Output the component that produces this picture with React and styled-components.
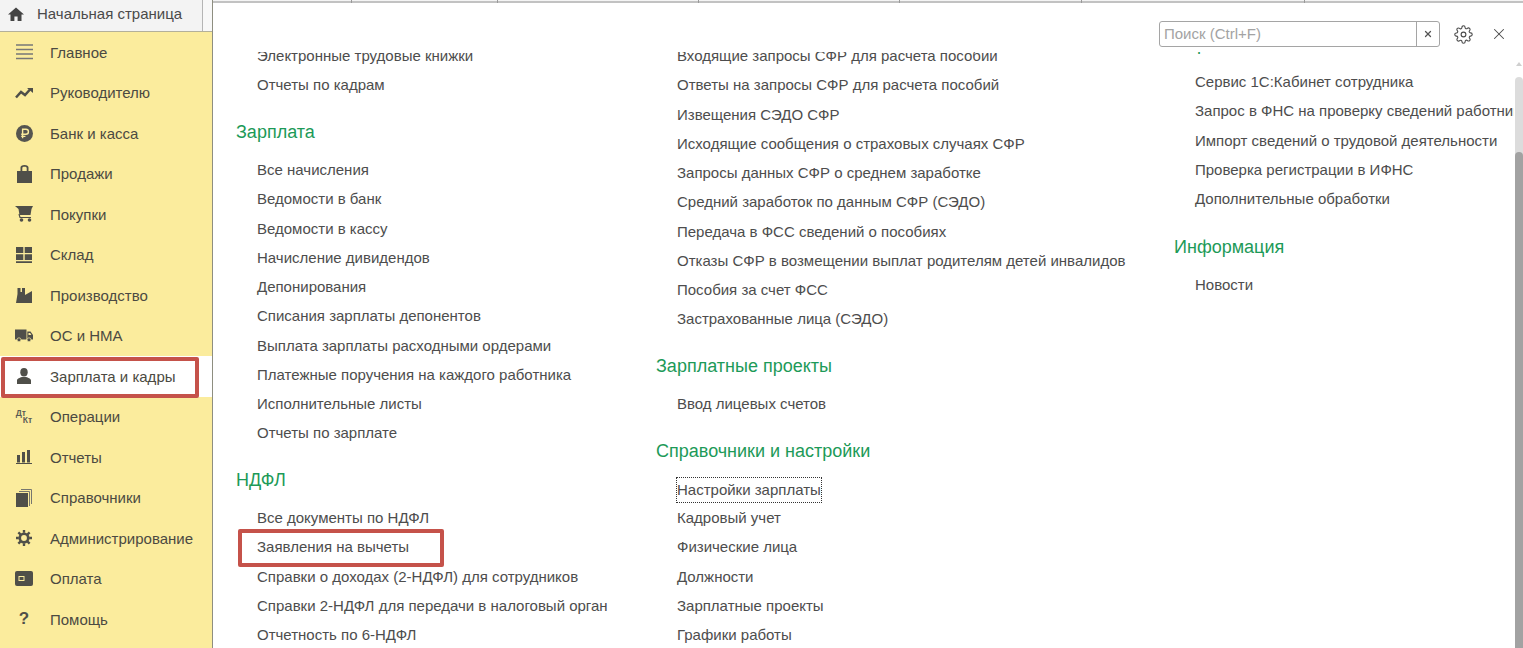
import React from 'react'
import styled, { createGlobalStyle } from 'styled-components'
import { FiSettings, FiX } from 'react-icons/fi'

const GlobalStyle = createGlobalStyle`
  html, body {
    margin: 0;
    padding: 0;
    height: 648px;
    overflow: hidden;
    background: #fff;
    font-family: "Liberation Sans", Arial, sans-serif;
  }
`

const Page = styled.div`
  display: flex;
  width: 1523px;
  height: 648px;
  overflow: hidden;
`

const Sidebar = styled.div`
  display: flex;
  flex-direction: column;
  width: 213px;
  box-sizing: border-box;
  flex-shrink: 0;
  background: #fbec9d;
  border-right: 1px solid #8e8e80;
`

const TabRow = styled.div`
  display: flex;
  height: 31px;
  flex-shrink: 0;
  background: #f8f8f8;
`

const HomeTab = styled.div`
  display: flex;
  align-items: center;
  gap: 13px;
  width: 203px;
  padding: 0 0 4px 8px;
  box-sizing: border-box;
  background: #f3f3f3;
  border-right: 1px solid #b5b5b5;
  font-size: 15px;
  color: #4a4a4a;
`

const Divider = styled.div`
  height: 1px;
  background: #b3b09a;
  flex-shrink: 0;
`

const Menu = styled.div`
  display: flex;
  flex-direction: column;
`

const MenuItem = styled.div`
  position: relative;
  display: flex;
  align-items: center;
  height: 40.5px;
  flex-shrink: 0;
  padding-left: 15px;
  gap: 17px;
  font-size: 15px;
  color: #4b4a42;
  background: ${(p) => (p.$active ? '#fff' : 'transparent')};
`

const IconSlot = styled.span`
  display: flex;
  align-items: center;
  justify-content: center;
  width: 18px;
  height: 18px;
  color: #4f4f49;
  flex-shrink: 0;
`

const MenuOutline = styled.div`
  position: absolute;
  left: 1px;
  top: 1px;
  bottom: -1.5px;
  width: 198px;
  box-sizing: border-box;
  border: 4px solid #c5524a;
  border-radius: 2px;
`

const LinkOutline = styled.div`
  position: absolute;
  left: -19px;
  right: -35px;
  top: -3px;
  bottom: -5px;
  box-sizing: border-box;
  border: 4px solid #c5524a;
  border-radius: 2px;
`

const Main = styled.div`
  flex: 1;
  display: flex;
  flex-direction: column;
  min-width: 0;
`

const TopStrip = styled.div`
  display: flex;
  height: 3px;
  box-sizing: border-box;
  flex-shrink: 0;
  background: #f4f4f4;
  border-bottom: 2px solid #c2c2c2;
`

const TopCell = styled.div`
  width: ${(p) => p.$w}px;
  box-sizing: border-box;
  height: 3px;
  border-right: 1px solid #9a9a9a;
  flex-shrink: 0;
`

const Header = styled.div`
  display: flex;
  justify-content: flex-end;
  align-items: center;
  height: 49px;
  padding: 0 15px 0 0;
  box-sizing: border-box;
  flex-shrink: 0;
`

const SearchBox = styled.div`
  display: flex;
  width: 281px;
  height: 26px;
  margin-top: 13px;
  box-sizing: border-box;
  border: 1px solid #a5a5a5;
  border-radius: 3px;
  background: #fff;
`

const SearchInput = styled.div`
  flex: 1;
  padding-left: 4px;
  font-size: 15px;
  line-height: 24px;
  color: #a3a3a3;
`

const SearchClear = styled.div`
  display: flex;
  align-items: center;
  justify-content: center;
  width: 22px;
  border-left: 1px solid #a5a5a5;
  color: #555;
`

const ToolButton = styled.span`
  display: flex;
  margin: 13px 0 0 ${(p) => p.$ml}px;
  color: #4a4a4a;
`

const Viewport = styled.div`
  flex: 1;
  display: flex;
  min-height: 0;
`

const Columns = styled.div`
  flex: 1;
  display: flex;
  min-width: 0;
  overflow: hidden;
`

const Column = styled.div`
  display: flex;
  flex-direction: column;
  width: ${(p) => p.$w}px;
  margin-top: ${(p) => p.$top}px;
  padding-left: 23px;
  box-sizing: border-box;
  flex-shrink: 0;
`

const Section = styled.div`
  display: flex;
  flex-direction: column;
  flex-shrink: 0;
  margin-bottom: ${(p) => p.$gap || 20.75}px;
`

const SectionTitle = styled.div`
  font-size: 18px;
  line-height: 24px;
  color: #1d9a58;
  margin-bottom: 10.7px;
`

const LinkItem = styled.div`
  position: relative;
  align-self: flex-start;
  margin-left: 21px;
  font-size: 15px;
  line-height: 29.25px;
  height: 29.25px;
  white-space: nowrap;
  color: #4d4d4d;
`

const Focus = styled.span`
  display: inline-block;
  line-height: 24px;
  vertical-align: middle;
  outline: 1px dotted #333;
`

const ScrollBar = styled.div`
  display: flex;
  flex-direction: column;
  width: 9px;
  flex-shrink: 0;
  padding-top: 10px;
  box-sizing: border-box;
`

const ScrollArrow = styled.div`
  width: 0;
  height: 0;
  margin: 0 auto 11px;
  border-left: 3px solid transparent;
  border-right: 3px solid transparent;
  border-bottom: 4px solid #cfcfcf;
`

const ScrollTrack = styled.div`
  flex: 1;
  display: flex;
  flex-direction: column;
  padding-top: 75px;
  margin-left: 1px;
  border-radius: 4px 4px 0 0;
  background: #dcdcdc;
`

const ScrollThumb = styled.div`
  flex: 1;
  border-radius: 4px 4px 0 0;
  background: #a2a2a2;
`

const OpsGlyph = styled.span`
  display: flex;
  flex-direction: column;
  font-size: 8.5px;
  font-weight: bold;
  line-height: 7px;
  color: #5c5c55;
`

const OpsLine = styled.span`
  padding-left: ${(p) => (p.$shift ? 7 : 0)}px;
`

const HelpGlyph = styled.span`
  font-size: 17px;
  font-weight: bold;
  color: #4f4f49;
`

const HomeIcon = () => (
  <svg width="16" height="14" viewBox="0 0 16 14">
    <path d="M8 .5 16 7.5H13.5V14H9.6V9.5H6.4V14H2.5V7.5H0Z" fill="#444" />
  </svg>
)

const icons = {
  main: (
    <svg width="17" height="16" viewBox="0 0 17 16">
      <path d="M0 1h17M0 5.500h17M0 10h17M0 14.500h17" stroke="#777" strokeWidth="1.500" />
    </svg>
  ),
  chart: (
    <svg width="18" height="12" viewBox="0 0 18 12">
      <path d="M1 10.500 6 5l4 3 5-5.500" stroke="#4f4f49" strokeWidth="2.500" fill="none" />
      <path d="M12 1h6v5z" fill="#4f4f49" />
    </svg>
  ),
  bank: (
    <svg width="17" height="17" viewBox="0 0 18 18">
      <circle cx="9" cy="9" r="9" fill="#555550" />
      <path d="M7 14V4.500h3.500a2.500 2.500 0 0 1 0 5.300h-5M5.500 12H10" stroke="#fbec9d" strokeWidth="1.500" fill="none" />
    </svg>
  ),
  bag: (
    <svg width="15" height="18" viewBox="0 0 15 18">
      <path d="M0 6h3.500V2.500C3.500 1 5 0 7.500 0s4 1 4 2.500V6H15v12H0zM5.300 6h4.400V3C9.700 2.200 8.800 1.700 7.500 1.700S5.300 2.200 5.300 3z" fillRule="evenodd" fill="#4f4f49" />
    </svg>
  ),
  cart: (
    <svg width="18" height="16" viewBox="0 0 18 16">
      <path d="M0 0h18l-1.500 3-1 6H4.500l-1-6z" fill="#4f4f49" />
      <path d="M4 8l1 3.500h11" stroke="#4f4f49" strokeWidth="1.200" fill="none" />
      <circle cx="6.500" cy="14" r="1.800" fill="#4f4f49" />
      <circle cx="14.500" cy="14" r="1.800" fill="#4f4f49" />
    </svg>
  ),
  stock: (
    <svg width="16" height="16" viewBox="0 0 16 16">
      <path d="M0 0h7.300v6H0zM8.700 0H16v6H8.700zM0 7.200h7.300v5.800H0zM8.700 7.200H16v5.800H8.700zM0 14.300h16V16H0z" fill="#4f4f49" />
    </svg>
  ),
  factory: (
    <svg width="16" height="16" viewBox="0 0 16 16">
      <path d="M0 16 1.500 7V1h3v4H6V1h3v7l7-4v12z" fill="#4f4f49" />
    </svg>
  ),
  truck: (
    <svg width="18" height="13" viewBox="0 0 18 13">
      <path d="M0 .5h11.500v10H0zM12.300 2.500h3.200L18 6v4.500h-5.700z" fill="#4f4f49" />
      <path d="M13.500 4h1.600l1.300 2h-2.900z" fill="#fbec9d" />
      <circle cx="4" cy="10.800" r="2" fill="#4f4f49" stroke="#fbec9d" strokeWidth=".7" />
      <circle cx="14" cy="10.800" r="2" fill="#4f4f49" stroke="#fbec9d" strokeWidth=".7" />
    </svg>
  ),
  person: (
    <svg width="14" height="16" viewBox="0 0 14 16">
      <ellipse cx="7" cy="4.300" rx="3.700" ry="4.200" fill="#4f4f49" />
      <path d="M0 16v-3.500C0 10.300 3 9.800 4.800 9h4.400c1.800.8 4.800 1.300 4.800 3.500V16z" fill="#4f4f49" />
    </svg>
  ),
  bars: (
    <svg width="16" height="14" viewBox="0 0 16 14">
      <path d="M1 5h3v7.500H1zM6 2h3v10.500H6zM11 0h3v12.500h-3zM0 13h16v1H0z" fill="#4f4f49" />
    </svg>
  ),
  books: (
    <svg width="16" height="18" viewBox="0 0 16 18">
      <path d="M5 .5h10.500V15M3 2.500h10.500V17" stroke="#77776f" strokeWidth="1" fill="none" />
      <path d="M0 4h12v14H0z" fill="#4f4f49" />
    </svg>
  ),
  gear: (
    <svg width="16" height="16" viewBox="0 0 17 17">
      <circle cx="8.500" cy="8.500" r="4.500" fill="none" stroke="#4f4f49" strokeWidth="2.800" />
      <path d="M8.500 0v3M8.500 14v3M0 8.500h3M14 8.500h3M2.500 2.500l2.200 2.200M12.300 12.300l2.200 2.200M14.500 2.500l-2.200 2.200M4.700 12.300l-2.200 2.200" stroke="#4f4f49" strokeWidth="2.500" />
    </svg>
  ),
  wallet: (
    <svg width="18" height="15" viewBox="0 0 18 15">
      <rect width="18" height="15" rx="2" fill="#4f4f49" />
      <rect x="4" y="5.500" width="5" height="4" fill="none" stroke="#fbec9d" strokeWidth="1" />
    </svg>
  ),
}

const menu = [
  ['main', 'Главное'],
  ['chart', 'Руководителю'],
  ['bank', 'Банк и касса'],
  ['bag', 'Продажи'],
  ['cart', 'Покупки'],
  ['stock', 'Склад'],
  ['factory', 'Производство'],
  ['truck', 'ОС и НМА'],
  ['person', 'Зарплата и кадры'],
  ['ops', 'Операции'],
  ['bars', 'Отчеты'],
  ['books', 'Справочники'],
  ['gear', 'Администрирование'],
  ['wallet', 'Оплата'],
  ['help', 'Помощь'],
]

const renderIcon = (key) => {
  if (key === 'ops') {
    return (
      <OpsGlyph>
        <OpsLine>Дт</OpsLine>
        <OpsLine $shift>Кт</OpsLine>
      </OpsGlyph>
    )
  }
  if (key === 'help') return <HelpGlyph>?</HelpGlyph>
  return icons[key]
}

const col1 = [
  { items: ['Электронные трудовые книжки', 'Отчеты по кадрам'] },
  {
    title: 'Зарплата',
    items: ['Все начисления', 'Ведомости в банк', 'Ведомости в кассу', 'Начисление дивидендов', 'Депонирования', 'Списания зарплаты депонентов', 'Выплата зарплаты расходными ордерами', 'Платежные поручения на каждого работника', 'Исполнительные листы', 'Отчеты по зарплате'],
  },
  {
    title: 'НДФЛ',
    items: ['Все документы по НДФЛ', 'Заявления на вычеты', 'Справки о доходах (2-НДФЛ) для сотрудников', 'Справки 2-НДФЛ для передачи в налоговый орган', 'Отчетность по 6-НДФЛ'],
  },
]

const col2 = [
  {
    items: ['Входящие запросы СФР для расчета пособий', 'Ответы на запросы СФР для расчета пособий', 'Извещения СЭДО СФР', 'Исходящие сообщения о страховых случаях СФР', 'Запросы данных СФР о среднем заработке', 'Средний заработок по данным СФР (СЭДО)', 'Передача в ФСС сведений о пособиях', 'Отказы СФР в возмещении выплат родителям детей инвалидов', 'Пособия за счет ФСС', 'Застрахованные лица (СЭДО)'],
  },
  { title: 'Зарплатные проекты', items: ['Ввод лицевых счетов'] },
  {
    title: 'Справочники и настройки',
    items: ['Настройки зарплаты', 'Кадровый учет', 'Физические лица', 'Должности', 'Зарплатные проекты', 'Графики работы'],
  },
]

const col3 = [
  {
    title: 'Сервис',
    gap: 22,
    items: ['Сервис 1С:Кабинет сотрудника', 'Запрос в ФНС на проверку сведений работника', 'Импорт сведений о трудовой деятельности', 'Проверка регистрации в ИФНС', 'Дополнительные обработки'],
  },
  { title: 'Информация', items: ['Новости'] },
]

const Sections = ({ data }) =>
  data.map((s, i) => (
    <Section key={i} $gap={s.gap}>
      {s.title && <SectionTitle>{s.title}</SectionTitle>}
      {s.items.map((t) => (
        <LinkItem key={t}>
          {t === 'Настройки зарплаты' ? <Focus>{t}</Focus> : t}
          {t === 'Заявления на вычеты' && <LinkOutline />}
        </LinkItem>
      ))}
    </Section>
  ))

export default function App() {
  return (
    <Page>
      <GlobalStyle />
      <Sidebar>
        <TabRow>
          <HomeTab>
            <HomeIcon />
            Начальная страница
          </HomeTab>
        </TabRow>
        <Divider />
        <Menu>
          {menu.map(([key, label]) => (
            <MenuItem key={key} $active={key === 'person'}>
              <IconSlot>{renderIcon(key)}</IconSlot>
              {label}
              {key === 'person' && <MenuOutline />}
            </MenuItem>
          ))}
        </Menu>
      </Sidebar>
      <Main>
        <TopStrip>
          {[139, 146, 201, 201, 182, 223].map((w, i) => (
            <TopCell key={i} $w={w} />
          ))}
        </TopStrip>
        <Header>
          <SearchBox>
            <SearchInput>Поиск (Ctrl+F)</SearchInput>
            <SearchClear>
              <FiX size={10} strokeWidth={3} />
            </SearchClear>
          </SearchBox>
          <ToolButton $ml={14}>
            <FiSettings size={19} strokeWidth={1.4} />
          </ToolButton>
          <ToolButton $ml={17}>
            <FiX size={18} strokeWidth={1.4} />
          </ToolButton>
        </Header>
        <Viewport>
          <Columns>
            <Column $w={420} $top={-10.85}>
              <Sections data={col1} />
            </Column>
            <Column $w={518} $top={-10.85}>
              <Sections data={col2} />
            </Column>
            <Column $w={400} $top={-19.7}>
              <Sections data={col3} />
            </Column>
          </Columns>
          <ScrollBar>
            <ScrollArrow />
            <ScrollTrack>
              <ScrollThumb />
            </ScrollTrack>
          </ScrollBar>
        </Viewport>
      </Main>
    </Page>
  )
}
